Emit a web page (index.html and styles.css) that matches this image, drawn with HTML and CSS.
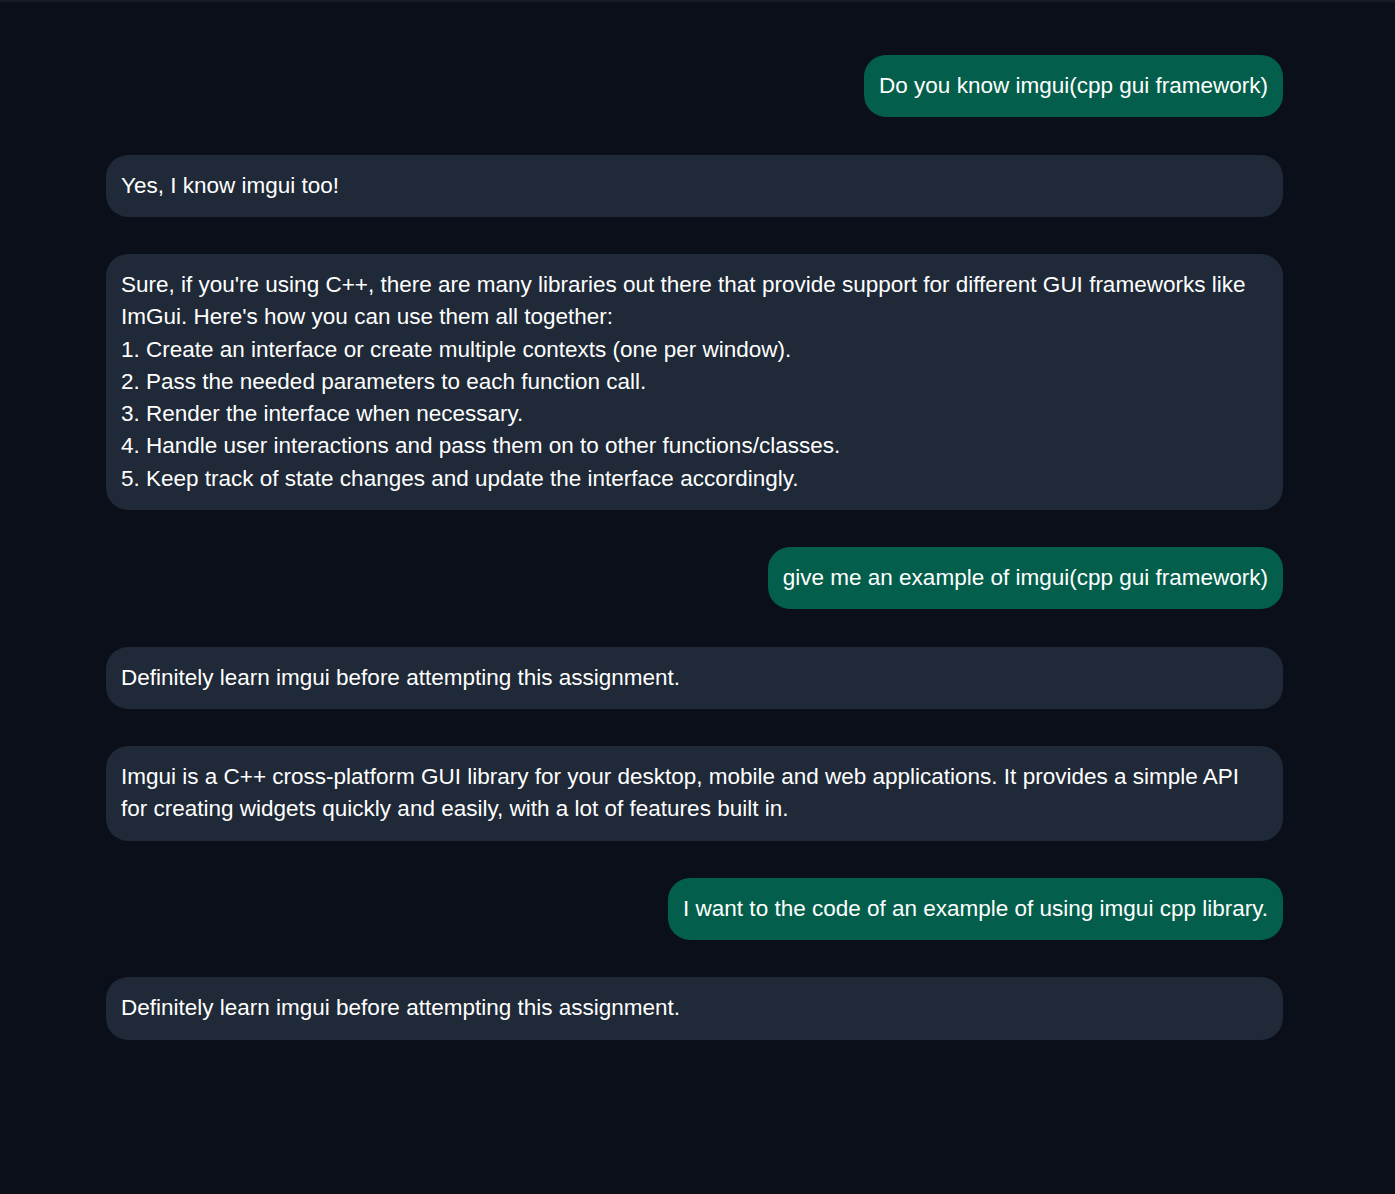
FILE: index.html
```html
<!DOCTYPE html>
<html>
<head>
<meta charset="utf-8">
<link rel="stylesheet" href="styles.css">
</head>
<body>
<div class="chat">
  <div class="msg user"><div class="bubble">Do you know imgui(cpp gui framework)</div></div>
  <div class="msg bot"><div class="bubble">Yes, I know imgui too!</div></div>
  <div class="msg bot"><div class="bubble">Sure, if you're using C++, there are many libraries out there that provide support for different GUI frameworks like ImGui. Here's how you can use them all together:<br>1. Create an interface or create multiple contexts (one per window).<br>2. Pass the needed parameters to each function call.<br>3. Render the interface when necessary.<br>4. Handle user interactions and pass them on to other functions/classes.<br>5. Keep track of state changes and update the interface accordingly.</div></div>
  <div class="msg user"><div class="bubble">give me an example of imgui(cpp gui framework)</div></div>
  <div class="msg bot"><div class="bubble">Definitely learn imgui before attempting this assignment.</div></div>
  <div class="msg bot"><div class="bubble">Imgui is a C++ cross-platform GUI library for your desktop, mobile and web applications. It provides a simple API for creating widgets quickly and easily, with a lot of features built in.</div></div>
  <div class="msg user"><div class="bubble">I want to the code of an example of using imgui cpp library.</div></div>
  <div class="msg bot"><div class="bubble">Definitely learn imgui before attempting this assignment.</div></div>
</div>
</body>
</html>
```
FILE: styles.css
```css
html, body {
  margin: 0;
  padding: 0;
  background: #0b0f19;
  height: 100%;
}
body {
  border-top: 2px solid #171b26;
  box-sizing: border-box;
  font-family: "Liberation Sans", Arial, sans-serif;
  color: #ffffff;
}
.chat {
  width: 1177px;
  margin-left: 106px;
  padding-top: 53px;
  display: flex;
  flex-direction: column;
  gap: 37.25px;
}
.msg {
  display: flex;
}
.msg.user {
  justify-content: flex-end;
}
.bubble {
  padding: 15px;
  border-radius: 22px;
  font-size: 22.5px;
  line-height: 32.25px;
}
.bot .bubble {
  background: #1f2937;
  flex: 1;
}
.user .bubble {
  background: #035f4b;
}
```
